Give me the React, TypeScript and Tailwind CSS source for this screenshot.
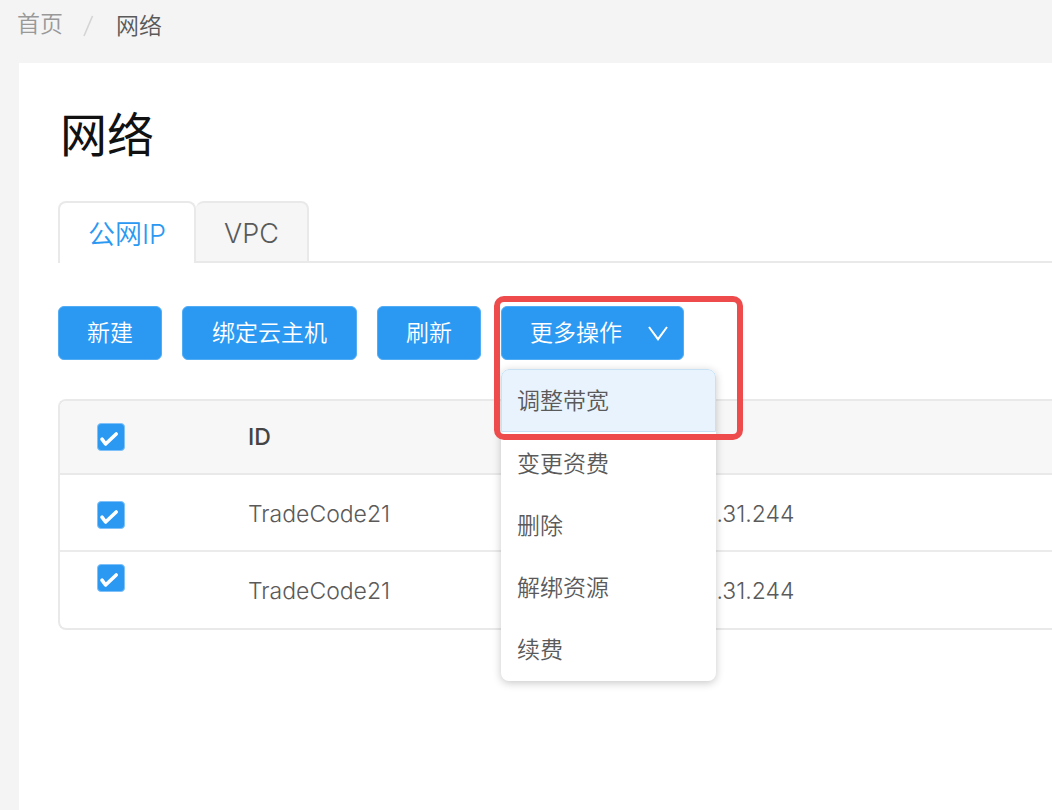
import { useState } from "react";
import clsx from "clsx";

const actions = ["调整带宽", "变更资费", "删除", "解绑资源", "续费"];

const rows = [
  { key: "a", id: "TradeCode21", ip: "3.31.244", box: "pt-[26px]" },
  { key: "b", id: "TradeCode21", ip: "3.31.244", box: "pt-3" },
];

function CheckBox({ label }: { label: string }) {
  return (
    <label className="grid size-7 cursor-pointer">
      <input
        type="checkbox"
        defaultChecked
        aria-label={label}
        className="peer col-start-1 row-start-1 size-7 appearance-none rounded border border-[#c9dff2] bg-white checked:border-[#7fc1f8] checked:bg-[#2b99f2]"
      />
      <svg
        viewBox="0 0 28 28"
        className="pointer-events-none col-start-1 row-start-1 size-7 opacity-0 peer-checked:opacity-100"
        fill="none"
        stroke="#fff"
        strokeWidth="3.6"
        strokeLinecap="round"
        strokeLinejoin="round"
        aria-hidden="true"
      >
        <path d="M5 16.2 L8.6 21 L19.2 11" />
      </svg>
    </label>
  );
}

const button =
  "h-[54px] rounded-md border border-[#52adf5] bg-[#2b99f2] px-7 text-white";

export default function App() {
  const [active, setActive] = useState(0);
  return (
    <div className="flex min-h-screen flex-col overflow-x-hidden bg-[#f4f4f4] font-['Inter','Noto_Sans_CJK_SC',sans-serif] text-[23px] font-[350] text-[#5a5a5a]">
      <nav aria-label="breadcrumb" className="flex h-[63px] shrink-0 items-start pl-[17px] pt-2">
        <a href="#home" className="leading-8 text-[#999]">首页</a>
        <svg viewBox="0 0 12 24" className="ml-[19px] mt-1.5 h-6 w-3" aria-hidden="true">
          <path d="M10.5 2 L2 22" stroke="#d4d4d4" strokeWidth="1.6" />
        </svg>
        <span className="ml-[22px] leading-9">网络</span>
      </nav>

      <main className="ml-[19px] grow bg-white pl-[39px] pt-[38px]">
        <h1 className="pl-0.5 text-[47px] font-normal leading-[68px] text-[#111]">网络</h1>

        <div role="tablist" className="mt-8 flex h-[62px] text-[27px]">
          <button
            type="button"
            role="tab"
            aria-selected="true"
            className="w-[138px] rounded-t-lg border-2 border-b-0 border-[#e9e9e9] bg-white pt-1 text-[#2b99f2]"
          >
            公网IP
          </button>
          <button
            type="button"
            role="tab"
            aria-selected="false"
            className="w-[113px] rounded-t-lg border-2 border-l-0 border-[#e9e9e9] bg-[#f6f6f6] pt-1"
          >
            VPC
          </button>
          <div className="grow border-b-2 border-[#e9e9e9]" />
        </div>

        <div className="mt-[43px] flex gap-5">
          <button type="button" className={button}>新建</button>
          <button type="button" className={clsx(button, "min-w-[175px]")}>绑定云主机</button>
          <button type="button" className={button}>刷新</button>
          <div className="relative">
            <button
              type="button"
              aria-haspopup="menu"
              aria-expanded="true"
              className="flex h-[54px] w-[183px] items-center justify-between rounded-md border border-[#52adf5] bg-[#2b99f2] pl-7 pr-3.5 text-white"
            >
              更多操作
              <svg viewBox="0 0 22 18" className="h-[18px] w-[22px]" fill="none" stroke="#fff" strokeWidth="2" aria-hidden="true">
                <path d="M2 3 L11 15.2 L20 3" />
              </svg>
            </button>
            <ul
              role="menu"
              className="absolute left-0 top-full z-10 mt-[9px] w-[215px] overflow-hidden rounded-lg bg-white pb-px shadow-[0_2px_8px_rgba(0,0,0,0.22)]"
            >
              {actions.map((label, i) => (
                <li key={label} role="none">
                  <button
                    type="button"
                    role="menuitem"
                    onClick={() => setActive(i)}
                    className={clsx(
                      "block w-full border px-[15px] pt-0.5 text-left",
                      i === active
                        ? "h-[63px] border-[#c8e1f5] bg-[#e9f3fd]"
                        : "h-[62px] border-transparent",
                      i === 0 && "rounded-t-lg",
                    )}
                  >
                    {label}
                  </button>
                </li>
              ))}
            </ul>
            <div className="pointer-events-none absolute -left-[7px] -top-2.5 z-20 h-[144px] w-[249px] rounded-[10px] border-6 border-[#ed4b4c]" />
          </div>
        </div>

        <div className="mt-[39px] overflow-hidden rounded-l-lg border-2 border-r-0 border-[#e9e9e9]">
          <table className="w-full table-fixed border-collapse text-left">
            <thead>
              <tr className="h-[73px] border-b-2 border-[#e9e9e9] bg-[#f7f7f7]">
                <th className="w-[164px] pl-[37px]">
                  <CheckBox label="全选" />
                </th>
                <th className="w-[455px] px-6 font-medium text-[#444]">ID</th>
                <th />
              </tr>
            </thead>
            <tbody>
              {rows.map((row) => (
                <tr key={row.key} className="h-[77px] border-t-2 border-[#ebebeb]">
                  <td className={clsx("pl-[37px] align-top", row.box)}>
                    <CheckBox label={row.id} />
                  </td>
                  <td className="px-6 pt-[3px]">{row.id}</td>
                  <td className="px-6 pt-[3px]">{row.ip}</td>
                </tr>
              ))}
            </tbody>
          </table>
        </div>
      </main>
    </div>
  );
}
